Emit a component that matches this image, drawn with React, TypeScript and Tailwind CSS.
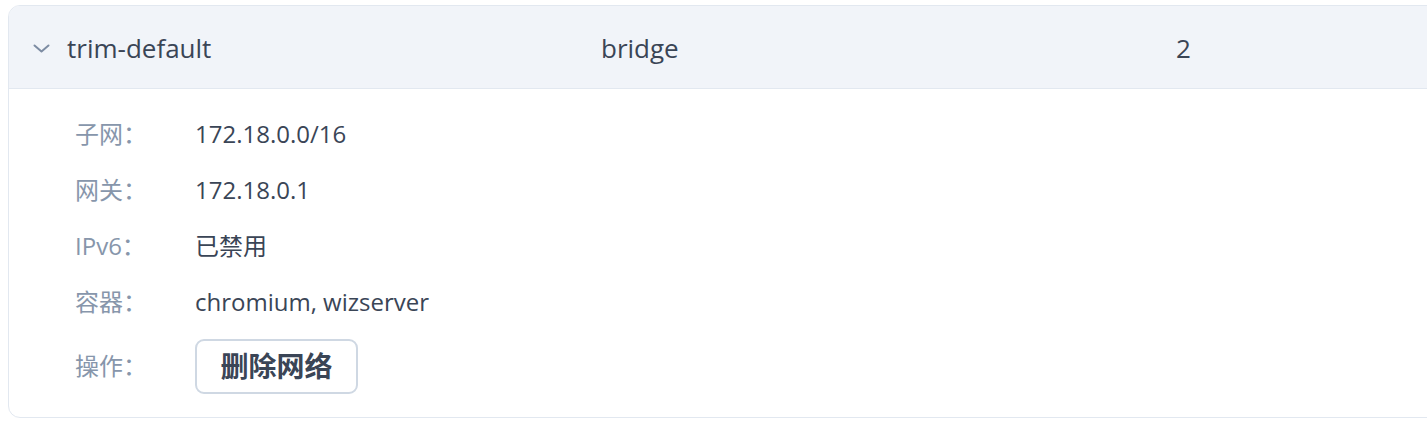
import React from "react";

const rows: { label: string; value: string }[] = [
  { label: "子网：", value: "172.18.0.0/16" },
  { label: "网关：", value: "172.18.0.1" },
  { label: "IPv6：", value: "已禁用" },
  { label: "容器：", value: "chromium, wizserver" },
];

function Chevron() {
  return (
    <svg width="17" height="9" viewBox="0 0 17 9" fill="none" className="shrink-0">
      <path d="M1.5 1.5 L8.5 7.5 L15.5 1.5" stroke="#7d8ca3" strokeWidth="2" strokeLinecap="round" strokeLinejoin="round" />
    </svg>
  );
}

export default function App() {
  return (
    <div
      className="w-[1427px] h-[423px] bg-white pt-[5px] pl-[8px] overflow-hidden"
      style={{ fontFamily: '"Open Sans", "Noto Sans CJK SC", sans-serif' }}
    >
      <div className="w-[1440px] h-[413px] border border-[#e2e8f0] rounded-[12px] overflow-hidden">
        {/* header */}
        <div className="h-[83px] bg-[#f1f4f9] border-b border-[#e2e8f0] flex items-center pl-[24px] pt-[2px] text-[26px] text-[#3a4556]">
          <Chevron />
          <span className="ml-[17px] w-[534px]">trim-default</span>
          <span className="w-[575px]">bridge</span>
          <span>2</span>
        </div>
        {/* details */}
        <div className="pl-[66px] pt-[17px] flex flex-col text-[24px]">
          {rows.map((r) => (
            <div key={r.label} className="h-[56px] flex items-center">
              <span className="w-[120px] text-[#8796ab]">{r.label}</span>
              <span className="text-[#3a4556]">{r.value}</span>
            </div>
          ))}
          <div className="h-[72px] flex items-center">
            <span className="w-[120px] text-[#8796ab]">操作：</span>
            <button className="w-[163px] h-[55px] border-2 border-[#cfd8e3] rounded-[9px] bg-white text-[28px] font-bold text-[#3a4556] flex items-center justify-center">
              删除网络
            </button>
          </div>
        </div>
      </div>
    </div>
  );
}
